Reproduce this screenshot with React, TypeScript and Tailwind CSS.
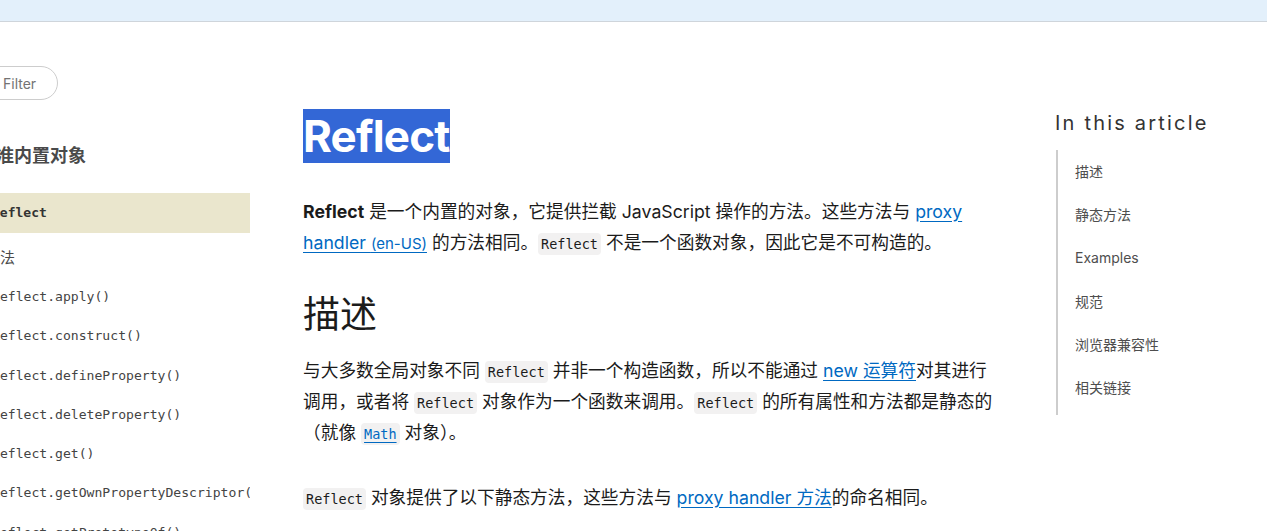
const sans = "font-['Inter','Noto_Sans_CJK_SC',sans-serif]";
const mono = "font-['DejaVu_Sans_Mono','Liberation_Mono',monospace]";

function Code({ children }: { children: React.ReactNode }) {
  return (
    <code className={`${mono} rounded-[4px] bg-[#f2f1f1] px-[3px] py-[3px] text-[13.5px] leading-none text-[#1b1b1b]`}>
      {children}
    </code>
  );
}

function A({ children }: { children: React.ReactNode }) {
  return <a className="text-[#0069c2] underline underline-offset-[3px]">{children}</a>;
}

const methods = [
  "Reflect.apply()",
  "Reflect.construct()",
  "Reflect.defineProperty()",
  "Reflect.deleteProperty()",
  "Reflect.get()",
  "Reflect.getOwnPropertyDescriptor()",
  "Reflect.getPrototypeOf()",
];

const toc = ["描述", "静态方法", "Examples", "规范", "浏览器兼容性", "相关链接"];

export default function App() {
  return (
    <div className={`${sans} h-[531px] w-[1267px] overflow-hidden bg-white text-[#1b1b1b]`}>
      <div className="h-[22px] border-b border-[#cfd5db] bg-[#e3f0fb]" />

      <div className="flex">
        {/* sidebar */}
        <aside className="w-[250px] shrink-0 overflow-hidden">
          <div className="-ml-[45px] w-[295px]">
            <div className="mt-[44px] ml-[5px] flex h-[34px] w-[98px] items-center rounded-full border border-[#cdcdcd] pl-[42px] text-[14px] text-[#737373]">
              Filter
            </div>
            <div className="mt-[44px] ml-[23px] text-[18px] font-bold leading-[24px] text-[#4a4a4a]">标准内置对象</div>
            <div className="mt-[25px] flex h-[40px] items-center bg-[#eae6cd] pl-[37px]">
              <span className={`${mono} text-[13px] font-bold text-[#333]`}>Reflect</span>
            </div>
            <div className="mt-[15px] h-[20px] text-[15px] leading-[20px] text-[#4a4a4a]">静态方法</div>
            <ul className="mt-[19px]">
              {methods.map((m) => (
                <li key={m} className={`${mono} h-[39.3px] whitespace-nowrap pl-[37px] text-[13.1px] leading-[20px] text-[#444]`}>
                  {m}
                </li>
              ))}
            </ul>
          </div>
        </aside>

        {/* article */}
        <main className="ml-[53px] w-[700px] shrink-0 text-[17.7px] leading-[31px]">
          <h1 className="mt-[88px] text-[44px] font-bold leading-[53px] tracking-[-0.8px]">
            <span className="bg-[#3367d6] text-white">Reflect</span>
          </h1>
          <p className="mt-[33px]">
            <b className="font-bold">Reflect</b> 是一个内置的对象，它提供拦截 JavaScript 操作的方法。这些方法与 <A>proxy handler <span className="text-[15px]">(en-US)</span></A> 的方法相同。<Code>Reflect</Code> 不是一个函数对象，因此它是不可构造的。
          </p>
          <h2 className="mt-[32px] text-[37px] font-normal leading-[48px]">描述</h2>
          <p className="mt-[16px]">
            与大多数全局对象不同 <Code>Reflect</Code> 并非一个构造函数，所以不能通过 <A>new 运算符</A>对其进行调用，或者将 <Code>Reflect</Code> 对象作为一个函数来调用。<Code>Reflect</Code> 的所有属性和方法都是静态的（就像 <Code><A>Math</A></Code> 对象）。
          </p>
          <p className="mt-[34px]">
            <Code>Reflect</Code> 对象提供了以下静态方法，这些方法与 <A>proxy handler 方法</A>的命名相同。
          </p>
        </main>

        {/* toc */}
        <nav className="ml-[52px] w-[220px] shrink-0">
          <div className="mt-[88px] text-[20px] font-normal leading-[26px] tracking-[2.2px] text-[#333]">In this article</div>
          <ul className="mt-[16px] ml-[1px] border-l-2 border-[#cdcdcd] pb-[4px]">
            {toc.map((t) => (
              <li key={t} className="-mt-[2px] mb-[2px] flex h-[43.2px] items-center pl-[17px] text-[14px] text-[#4e4e4e]">
                {t}
              </li>
            ))}
          </ul>
        </nav>
      </div>
    </div>
  );
}
